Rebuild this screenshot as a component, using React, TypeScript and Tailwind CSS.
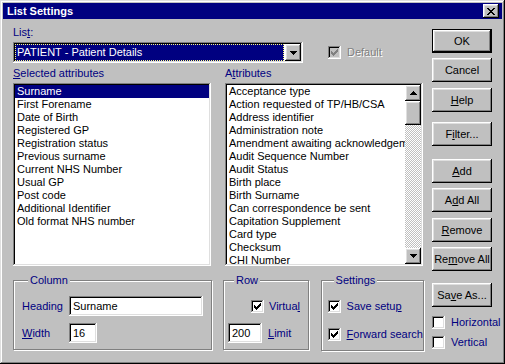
import type { ReactNode } from "react";

const RAISED =
  "shadow-[inset_-1px_-1px_#000,inset_1px_1px_#fff,inset_-2px_-2px_#808080,inset_2px_2px_#dfdfdf]";
const SUNKEN =
  "shadow-[inset_-1px_-1px_#fff,inset_1px_1px_#808080,inset_-2px_-2px_#dfdfdf,inset_2px_2px_#000]";
const DITHER =
  "bg-[image:repeating-conic-gradient(#c0c0c0_0_25%,#ffffff_0_50%)] bg-[length:2px_2px]";
const GROUP =
  "border border-[#808080] shadow-[1px_1px_0_#fff,inset_1px_1px_0_#fff] whitespace-nowrap";

const selected = [
  "Surname",
  "First Forename",
  "Date of Birth",
  "Registered GP",
  "Registration status",
  "Previous surname",
  "Current NHS Number",
  "Usual GP",
  "Post code",
  "Additional Identifier",
  "Old format NHS number",
];

const attributes = [
  "Acceptance type",
  "Action requested of TP/HB/CSA",
  "Address identifier",
  "Administration note",
  "Amendment awaiting acknowledgement",
  "Audit Sequence Number",
  "Audit Status",
  "Birth place",
  "Birth Surname",
  "Can correspondence be sent",
  "Capitation Supplement",
  "Card type",
  "Checksum",
  "CHI Number",
];

function U({ children }: { children: ReactNode }) {
  return <span className="underline underline-offset-1">{children}</span>;
}

function Arrow({ up }: { up?: boolean }) {
  return (
    <svg width="7" height="4" viewBox="0 0 7 4" shapeRendering="crispEdges">
      <path
        d={
          up
            ? "M3 0h1v1h1v1h1v1h1v1H0V3h1V2h1V1h1z"
            : "M0 0h7v1H6v1H5v1H4v1H3V3H2V2H1V1H0z"
        }
        fill="#000"
      />
    </svg>
  );
}

function Check({ checked, disabled }: { checked?: boolean; disabled?: boolean }) {
  return (
    <span
      className={`flex h-[13px] w-[13px] shrink-0 items-center justify-center ${SUNKEN} ${
        disabled ? "bg-[#c0c0c0]" : "bg-white"
      }`}
    >
      {checked && (
        <svg width="7" height="7" viewBox="0 0 7 7" shapeRendering="crispEdges">
          <path
            d="M0 2h1v3H0zM1 3h1v3H1zM2 4h1v3H2zM3 3h1v3H3zM4 2h1v3H4zM5 1h1v3H5zM6 0h1v3H6z"
            fill={disabled ? "#808080" : "#000"}
          />
        </svg>
      )}
    </span>
  );
}

function Btn({
  children,
  isDefault,
  className = "",
}: {
  children: ReactNode;
  isDefault?: boolean;
  className?: string;
}) {
  return (
    <button
      type="button"
      className={`flex h-[24px] w-[60px] items-center justify-center whitespace-nowrap bg-[#c0c0c0] text-black ${
        isDefault ? "border border-black" : ""
      } ${RAISED} ${className}`}
    >
      {children}
    </button>
  );
}

function Field({ value, className = "" }: { value: string; className?: string }) {
  return (
    <div className={`flex h-[20px] items-center bg-white px-[4px] text-black ${SUNKEN} ${className}`}>
      {value}
    </div>
  );
}

export default function App() {
  return (
    <div
      className={`flex h-[364px] w-[505px] flex-col bg-[#c0c0c0] p-[3px] font-['Liberation_Sans',Arial,sans-serif] text-[11px] leading-[13px] text-black shadow-[inset_-1px_-1px_#000,inset_1px_1px_#dfdfdf,inset_-2px_-2px_#808080,inset_2px_2px_#fff]`}
    >
      {/* title bar */}
      <div className="flex h-[16px] items-center justify-between bg-[#000080] pl-[4px] pr-[3px]">
        <span className="font-bold text-white">List Settings</span>
        <button
          type="button"
          className={`flex h-[14px] w-[16px] items-center justify-center bg-[#c0c0c0] ${RAISED}`}
        >
          <svg width="8" height="7" viewBox="0 0 8 7" shapeRendering="crispEdges">
            <path
              d="M0 0h2v1H0zM6 0h2v1H6zM1 1h2v1H1zM5 1h2v1H5zM2 2h4v1H2zM3 3h2v1H3zM2 4h4v1H2zM1 5h2v1H1zM5 5h2v1H5zM0 6h2v1H0zM6 6h2v1H6z"
              fill="#000"
            />
          </svg>
        </button>
      </div>

      <div className="flex pl-[10px]">
        {/* left side */}
        <div className="w-[411px] pt-[7px]">
          <div className="text-[#000080]">
            Lis<U>t</U>:
          </div>

          <div className="mt-[3px] flex items-center">
            <div className={`flex h-[21px] w-[290px] bg-white p-[2px] ${SUNKEN}`}>
              <div className="mr-[1px] flex flex-1 items-center bg-[#000080] pl-[2px] text-white outline-1 -outline-offset-1 outline-dotted outline-[#ffff80]">
                PATIENT - Patient Details
              </div>
              <div className={`flex w-[16px] items-center justify-center bg-[#c0c0c0] ${RAISED}`}>
                <Arrow />
              </div>
            </div>
            <label className="ml-[25px] flex items-center gap-[6px] text-[#808080] [text-shadow:1px_1px_0_#fff]">
              <Check checked disabled />
              Default
            </label>
          </div>

          <div className="mt-[4px] flex text-[#000080]">
            <div className="w-[212px]">
              <U>S</U>elected attributes
            </div>
            <div>
              A<U>t</U>tributes
            </div>
          </div>

          <div className="mt-[3px] flex gap-[14px]">
            <div className={`h-[183px] w-[198px] overflow-hidden bg-white p-[2px] ${SUNKEN}`}>
              {selected.map((s, i) => (
                <div
                  key={s}
                  className={`h-[13px] whitespace-nowrap pl-[2px] ${
                    i === 0 ? "bg-[#000080] text-white" : ""
                  }`}
                >
                  {s}
                </div>
              ))}
            </div>
            <div className={`flex h-[183px] w-[198px] bg-white p-[2px] ${SUNKEN}`}>
              <div className="flex-1 overflow-hidden">
                {attributes.map((s) => (
                  <div key={s} className="h-[13px] whitespace-nowrap pl-[2px]">
                    {s}
                  </div>
                ))}
              </div>
              <div className="flex w-[16px] flex-col">
                <div className={`flex h-[16px] items-center justify-center bg-[#c0c0c0] ${RAISED}`}>
                  <Arrow up />
                </div>
                <div className={`flex-1 ${DITHER}`}>
                  <div className={`h-[24px] bg-[#c0c0c0] ${RAISED}`} />
                </div>
                <div className={`flex h-[16px] items-center justify-center bg-[#c0c0c0] ${RAISED}`}>
                  <Arrow />
                </div>
              </div>
            </div>
          </div>

          {/* group boxes */}
          <div className="mt-[8px] flex items-start">
            <fieldset className={`w-[199px] px-[8px] pt-[9px] pb-[6px] ${GROUP}`}>
              <legend className="ml-[6px] bg-[#c0c0c0] px-[2px] text-[#000080]">Column</legend>
              <div className="flex items-center">
                <span className="w-[47px] text-[#000080]">Heading</span>
                <Field value="Surname" className="w-[134px]" />
              </div>
              <div className="mt-[7px] flex items-center">
                <span className="w-[47px] text-[#000080]">
                  <U>W</U>idth
                </span>
                <Field value="16" className="w-[28px]" />
              </div>
            </fieldset>

            <fieldset className={`ml-[11px] w-[86px] pt-[13px] pb-[6px] pl-[4px] ${GROUP}`}>
              <legend className="ml-[6px] bg-[#c0c0c0] px-[2px] text-[#000080]">Row</legend>
              <div className="flex items-center gap-[5px] pl-[23px] text-[#000080]">
                <Check checked />
                <span>
                  Virtua<U>l</U>
                </span>
              </div>
              <div className="mt-[10px] flex items-center gap-[6px] text-[#000080]">
                <Field value="200" className="w-[34px]" />
                <span>
                  <U>L</U>imit
                </span>
              </div>
            </fieldset>

            <fieldset className={`ml-[12px] w-[103px] pt-[13px] pb-[9px] pl-[6px] ${GROUP}`}>
              <legend className="ml-[6px] bg-[#c0c0c0] px-[2px] text-[#000080]">Settings</legend>
              <div className="flex items-center gap-[6px] text-[#000080]">
                <Check checked />
                <span>
                  Save setu<U>p</U>
                </span>
              </div>
              <div className="mt-[15px] flex items-center gap-[6px] text-[#000080]">
                <Check checked />
                <span>
                  <U>F</U>orward search
                </span>
              </div>
            </fieldset>
          </div>
        </div>

        {/* right buttons */}
        <div className="ml-[8px] flex w-[64px] flex-col pt-[10px]">
          <Btn isDefault>OK</Btn>
          <Btn className="mt-[5px]">Cancel</Btn>
          <Btn className="mt-[6px]">
            <U>H</U>elp
          </Btn>
          <Btn className="mt-[10px]">
            F<U>i</U>lter...
          </Btn>
          <Btn className="mt-[13px]">
            <U>A</U>dd
          </Btn>
          <Btn className="mt-[5px]">
            A<U>d</U>d All
          </Btn>
          <Btn className="mt-[6px]">
            <U>R</U>emove
          </Btn>
          <Btn className="mt-[5px]">
            Re<U>m</U>ove All
          </Btn>
          <Btn className="mt-[12px]">
            Sa<U>v</U>e As...
          </Btn>
          <div className="mt-[9px] flex items-center gap-[6px] text-[#000080]">
            <Check />
            Horizontal
          </div>
          <div className="mt-[7px] flex items-center gap-[6px] text-[#000080]">
            <Check />
            Vertical
          </div>
        </div>
      </div>
    </div>
  );
}
